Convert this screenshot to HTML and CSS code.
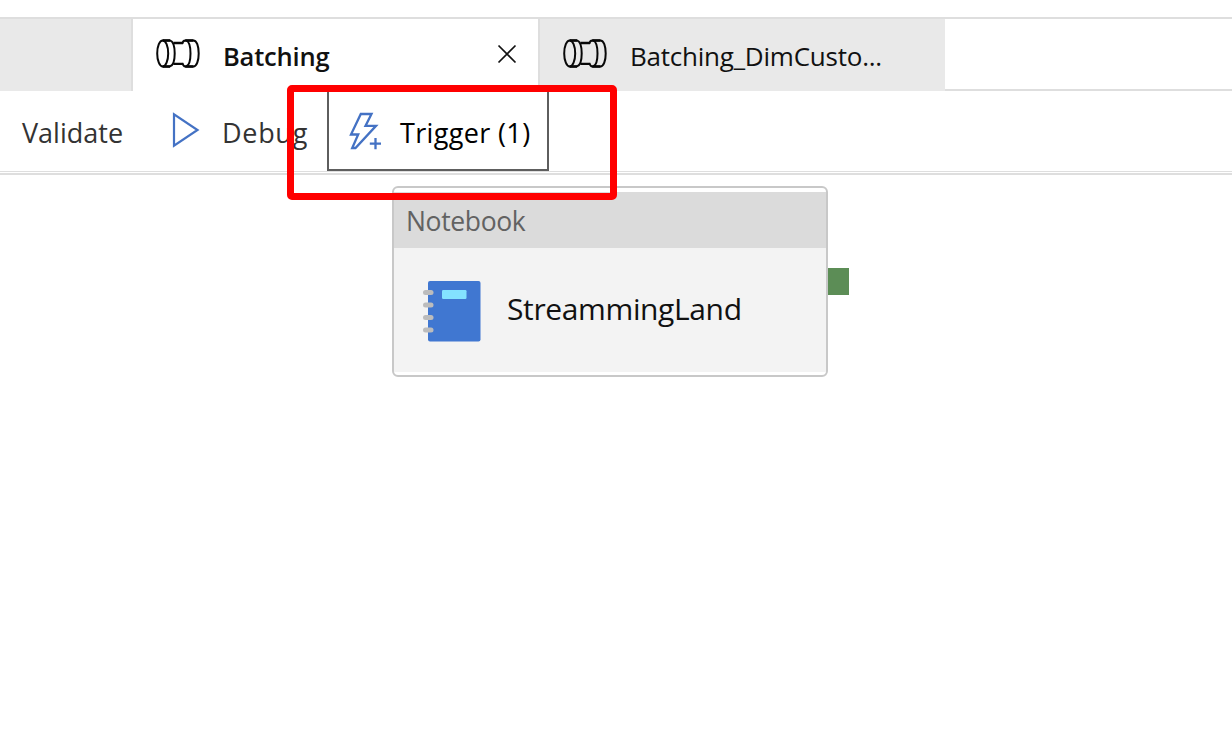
FILE: index.html
```html
<!DOCTYPE html>
<html lang="en">
<head>
<meta charset="utf-8">
<title>Batching</title>
<link rel="stylesheet" href="styles.css">
</head>
<body>
<svg class="defs" width="0" height="0" aria-hidden="true">
  <symbol id="pipeline" viewBox="0 0 44 31">
    <g fill="none" stroke="currentColor" stroke-width="2" stroke-linejoin="round">
      <ellipse cx="6.7" cy="15.4" rx="5.5" ry="13"/>
      <path d="M6.7 2.4H14C17 3.5 18.7 8.5 18.7 15.4S17 27.3 14 28.4H6.7"/>
      <path d="M17.3 5H27M17.3 25.8H27" stroke-width="2.3"/>
      <path d="M26.3 5.8C26.6 4 27.5 2.4 29.2 2.4H37.4C40.7 2.4 42.7 8.2 42.7 15.4S40.7 28.4 37.4 28.4H29.2C27.8 28.4 26.9 27 26.4 25"/>
      <path d="M30.2 2.4C32.8 3.5 34.5 8.5 34.5 15.4S32.8 27.3 30.2 28.4"/>
      <path d="M6.7 2.4H14M6.7 28.4H14M29.2 2.4H37.4M29.2 28.4H37.4" stroke-width="2.5"/>
    </g>
  </symbol>
</svg>
<main class="app">
  <nav class="tabs">
    <div class="tab tab-previous"></div>
    <div class="tab tab-active">
      <svg class="pipe"><use href="#pipeline"/></svg>
      <span class="tab-name name-active">Batching</span>
      <svg class="close" viewBox="0 0 20 20"><path d="M1.5 1.5 18.5 18.5M18.5 1.5 1.5 18.5"/></svg>
    </div>
    <div class="tab tab-next">
      <svg class="pipe"><use href="#pipeline"/></svg>
      <span class="tab-name name-next">Batching_DimCusto...</span>
    </div>
    <div class="tabs-rest"></div>
  </nav>
  <div class="toolbar">
    <span class="label validate">Validate</span>
    <svg class="play" viewBox="0 0 28 36"><path d="M2 2.3V33.7L25.5 18Z"/></svg>
    <span class="label debug">Debug</span>
    <button class="trigger">
      <svg class="bolt" viewBox="0 0 34 38"><path d="M11.8 2H22.5L16.5 13.9H27L6.5 36H3.2L9.2 22.5H2Z"/><path d="M26.5 26V37.3M20.8 31.7H32"/></svg>
      <span class="label trigger-label">Trigger (1)</span>
    </button>
  </div>
  <section class="canvas">
    <article class="node">
      <header class="node-type"><span>Notebook</span></header>
      <div class="node-body">
        <svg class="notebook" viewBox="0 0 58 62">
          <rect x="5" y="1" width="52.5" height="60.5" rx="2" fill="#4077d1"/>
          <rect x="19" y="10" width="24.5" height="9" rx="1.2" fill="#83e2ff"/>
          <g fill="#bcbcbc"><rect y="10" width="10.5" height="5" rx="2.5"/><rect y="22.5" width="10.5" height="5" rx="2.5"/><rect y="35" width="10.5" height="5" rx="2.5"/><rect y="47.5" width="10.5" height="5" rx="2.5"/></g>
        </svg>
        <span class="node-name">StreammingLand</span>
      </div>
      <i class="port"></i>
    </article>
  </section>
  <div class="highlight"></div>
</main>
</body>
</html>
```
FILE: styles.css
```css
* { box-sizing: border-box; }
body { margin: 0; background: #fff; font-family: "Open Sans", "Noto Sans", sans-serif; }
.defs { position: absolute; }
.app { position: relative; width: 1232px; height: 733px; overflow: hidden; padding-top: 17px; display: flex; flex-direction: column; }
svg { display: block; flex: none; }
span { white-space: nowrap; }
.tabs { display: flex; height: 74px; border-top: 2px solid #dedede; }
.tab { display: flex; align-items: flex-start; flex: none; background: #e9e9e9; border-right: 2px solid #dedede; }
.tab-previous { width: 133px; }
.tab-active { width: 407px; padding-left: 23px; background: #fff; }
.tab-next { width: 405px; padding-left: 23px; border-right: 0; }
.tabs-rest { flex: 1; border-bottom: 2px solid #dedede; }
.pipe { width: 44px; height: 31px; margin-top: 19px; color: #080808; }
.tab-name { margin-left: 23px; margin-top: 19px; line-height: 36px; font-size: 26px; color: #111; }
.name-active { width: 250px; font-weight: 600; font-size: 25.5px; letter-spacing: -0.2px; }
.name-next { letter-spacing: -0.23px; }
.close { width: 20px; height: 20px; margin: 25px 0 0 24px; fill: none; stroke: #111; stroke-width: 1.7; }
.toolbar { display: flex; align-items: flex-start; height: 84px; padding-left: 22px; border-bottom: 2px solid #dedede; box-shadow: inset 0 -1px #fff, inset 0 -2px #dedede; }
.label { font-size: 27px; line-height: 38px; margin-top: 23px; color: #333; }
.validate { width: 150px; }
.play { width: 28px; height: 36px; margin-top: 21px; fill: none; stroke: #4472c4; stroke-width: 2.2; }
.debug { width: 105px; margin-left: 22px; letter-spacing: 0.7px; }
.trigger { display: flex; align-items: flex-start; width: 222px; height: 80px; padding: 0 0 0 20px; border: 2px solid #5e5e5e; border-top: 0; background: #fff; font: inherit; text-align: left; }
.bolt { width: 34px; height: 38px; margin-top: 21px; fill: none; stroke: #4472c4; stroke-width: 2.3; }
.trigger-label { margin-left: 17px; margin-top: 23px; letter-spacing: 0.35px; color: #000; }
.canvas { flex: 1; padding: 11px 0 0 392px; }
.node { position: relative; width: 436px; height: 191px; padding: 4px 0 3px; border: 2px solid #c8c8c8; border-radius: 6px; background: #fff; }
.node-type { height: 56px; padding-left: 12px; background: #dbdbdb; color: #626262; font-size: 26.5px; letter-spacing: -0.35px; line-height: 58px; }
.node-body { display: flex; align-items: flex-start; height: 124px; padding-left: 29px; background: #f3f3f3; }
.notebook { width: 58px; height: 62px; margin-top: 32px; }
.node-name { margin: 39px 0 0 26px; font-size: 30px; letter-spacing: -0.37px; line-height: 44px; color: #111; }
.port { position: absolute; left: 434px; top: 80px; width: 21px; height: 27px; background: #5c8d56; }
.highlight { position: absolute; left: 287px; top: 85px; width: 330px; height: 115px; border: 7px solid #f00; border-radius: 5px; }
```
